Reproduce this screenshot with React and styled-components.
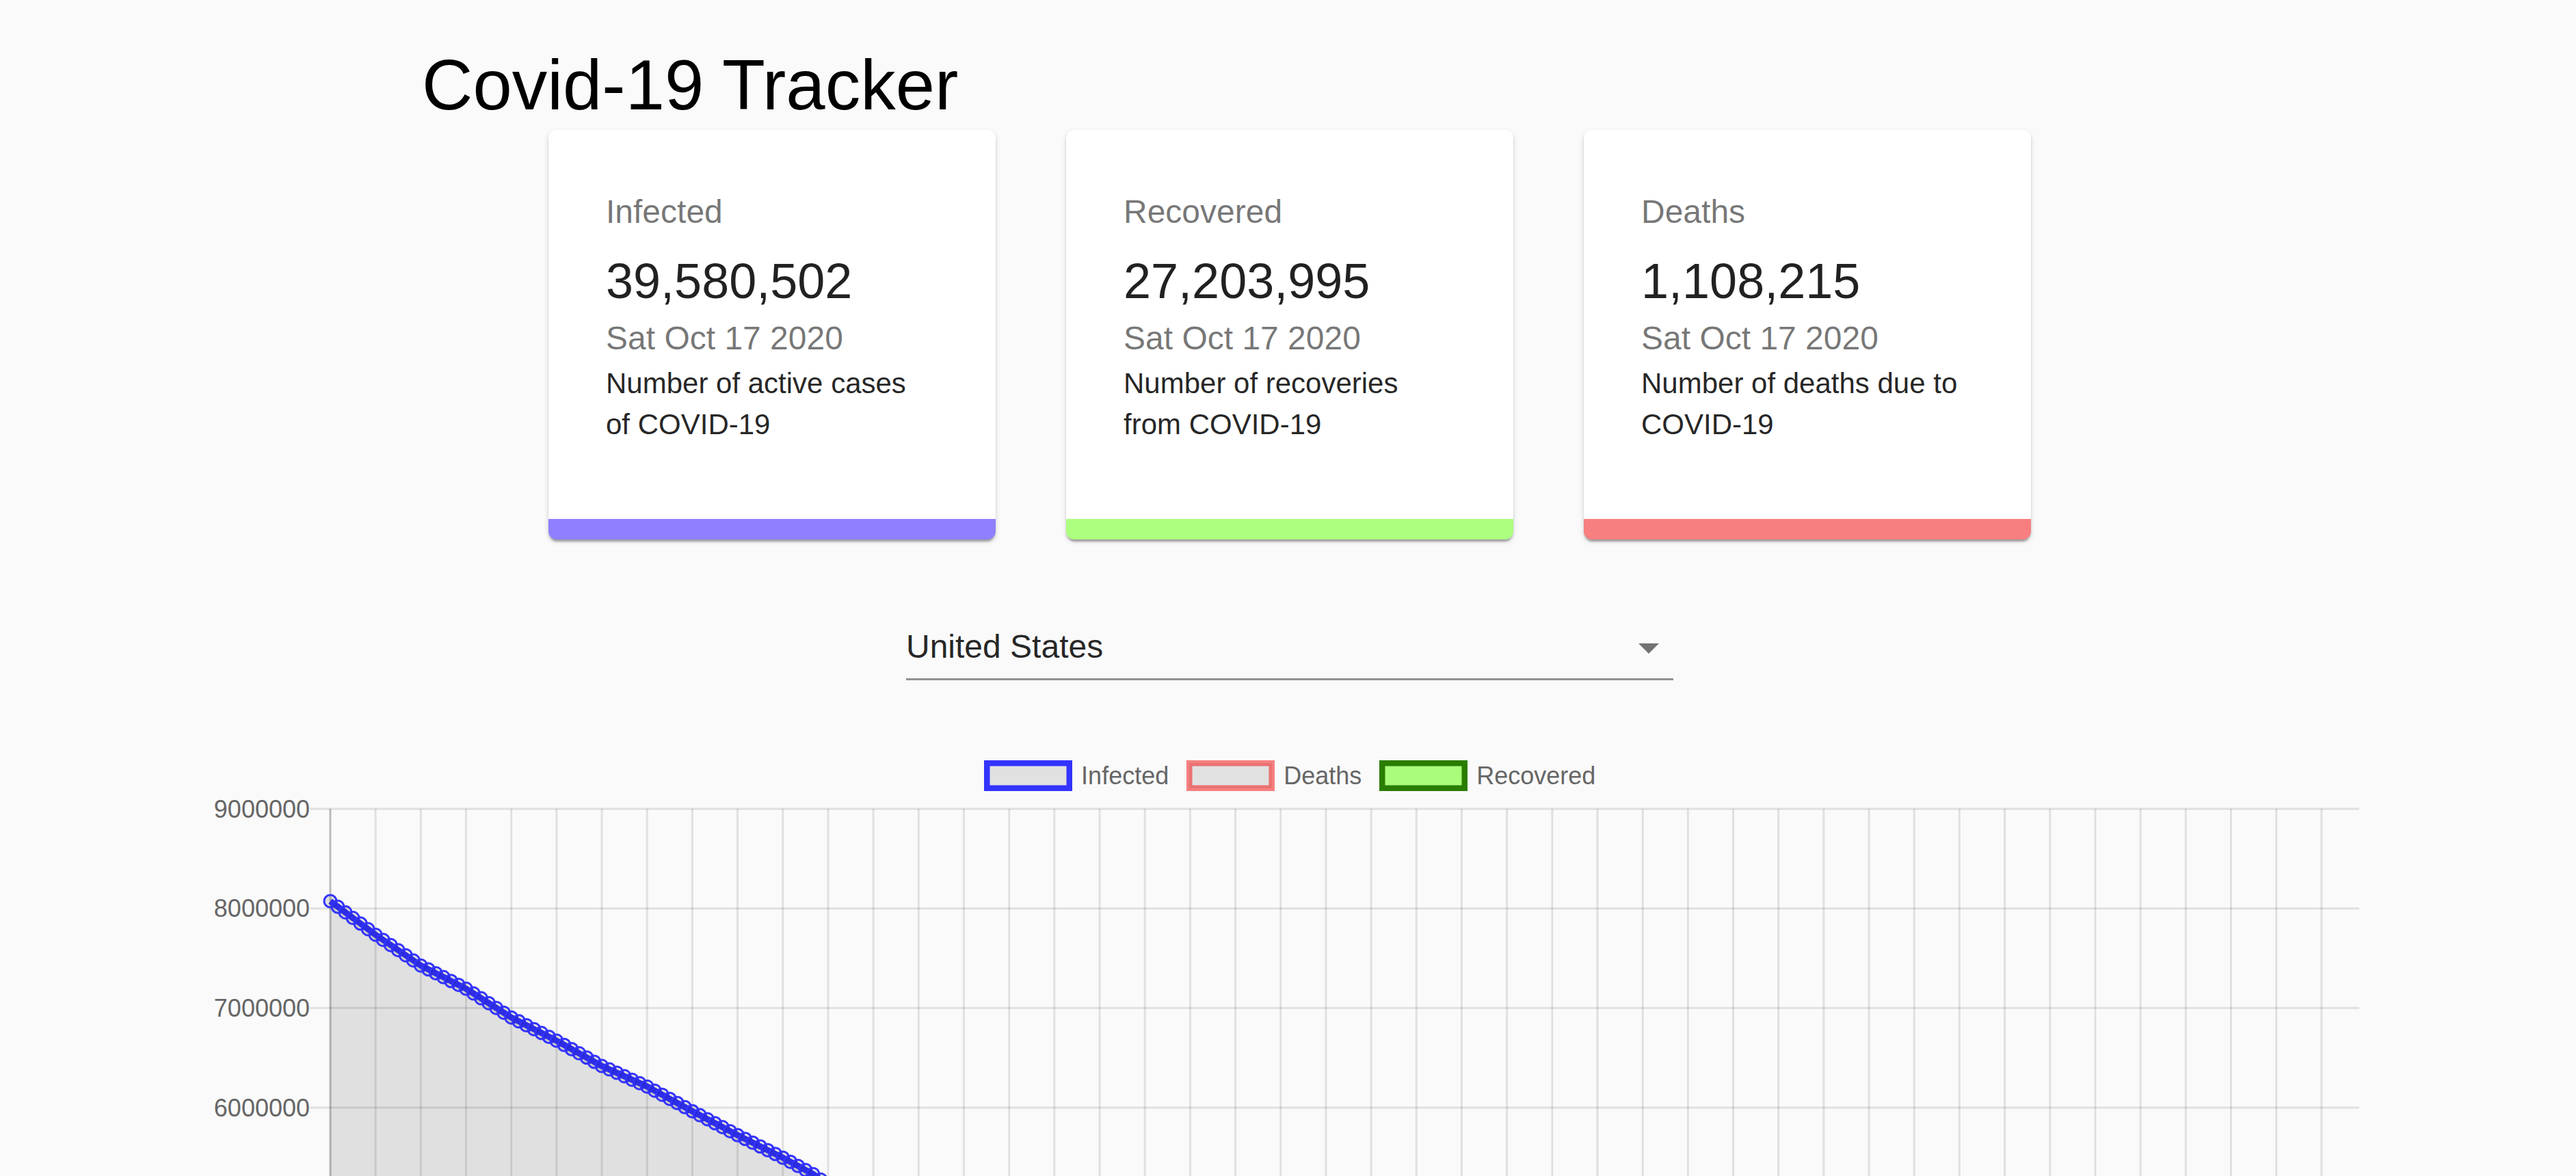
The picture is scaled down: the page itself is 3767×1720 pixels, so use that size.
import React from 'react';
import styled, { createGlobalStyle } from 'styled-components';

const GlobalStyle = createGlobalStyle`
  html, body {
    margin: 0;
    padding: 0;
    background: #fafafa;
  }
  body {
    font-family: 'Liberation Sans', Arial, Helvetica, sans-serif;
  }
`;

const Page = styled.div`
  height: 100vh;
  overflow: hidden;
  box-sizing: border-box;
  padding: 64.8px 0 0 5px;
  display: flex;
  flex-direction: column;
  align-items: center;

  & > * {
    flex-shrink: 0;
  }
`;

const Title = styled.h1`
  align-self: flex-start;
  margin: 0 0 0 612px;
  font-size: 103px;
  font-weight: 400;
  line-height: 120px;
  color: #000;
`;

const CardRow = styled.div`
  display: flex;
  justify-content: center;
  gap: 103px;
  margin-top: 5.2px;
`;

const StatCard = styled.div`
  width: 654px;
  box-sizing: border-box;
  padding: 84px 94px 108px 84px;
  background: #fff;
  border-radius: 12px;
  border-bottom: 30px solid ${props => props.$accent};
  box-shadow: 0 6px 3px -3px rgba(0, 0, 0, 0.2), 0 3px 3px 0 rgba(0, 0, 0, 0.14),
    0 3px 9px 0 rgba(0, 0, 0, 0.12);
`;

const CardLabel = styled.div`
  font-size: 48px;
  line-height: 72px;
  color: rgba(0, 0, 0, 0.54);
  margin-bottom: 16.8px;
`;

const CardValue = styled.div`
  font-size: 72px;
  line-height: 96px;
  color: rgba(0, 0, 0, 0.87);
`;

const CardDate = styled.div`
  font-size: 48px;
  line-height: 72px;
  color: rgba(0, 0, 0, 0.54);
`;

const CardText = styled.p`
  margin: 0;
  font-size: 42px;
  line-height: 60.06px;
  color: rgba(0, 0, 0, 0.87);
`;

const Picker = styled.div`
  position: relative;
  width: 1122px;
  margin: 110px 0 90px;
  border-bottom: 3px solid rgba(0, 0, 0, 0.42);
`;

const PickerSelect = styled.select`
  appearance: none;
  -webkit-appearance: none;
  display: block;
  width: 100%;
  height: 93px;
  box-sizing: border-box;
  padding: 18px 72px 18px 0;
  border: 0;
  border-radius: 0;
  background: transparent;
  font-family: inherit;
  font-size: 48px;
  line-height: 57px;
  color: rgba(0, 0, 0, 0.87);
  outline: none;
`;

const PickerArrow = styled.svg`
  position: absolute;
  right: 0;
  top: 12px;
  width: 72px;
  height: 72px;
  fill: rgba(0, 0, 0, 0.54);
  pointer-events: none;
`;

const ChartWrap = styled.div`
  width: 3202px;
`;

const Legend = styled.div`
  display: flex;
  justify-content: center;
  gap: 25.5px;
  padding-top: 27.5px;
`;

const LegendItem = styled.div`
  display: flex;
  align-items: center;
  gap: 13.5px;
  font-size: 36px;
  line-height: 45px;
  color: #666;
`;

const Swatch = styled.span`
  display: block;
  width: 129px;
  height: 45px;
  box-sizing: border-box;
  border: 4.5px solid ${props => props.$stroke};
  box-shadow: inset 0 0 0 4.5px ${props => props.$inner || props.$stroke};
  background: ${props => props.$fill};
`;

const ChartSvg = styled.svg`
  display: block;
  margin-top: 2.5px;
`;

const AxisLabel = styled.text`
  font-family: 'Liberation Sans', Arial, Helvetica, sans-serif;
  font-size: 36px;
  fill: #666;
`;

// days counted back from Oct 17 2020 (index 0) to Jan 22 2020 (index 269)
const DAYS = 270;

const infectedAnchors = [
  [0, 8073000], [6, 7736000], [12, 7427000], [18, 7194000], [24, 6905000],
  [30, 6672000], [36, 6418000], [42, 6212000], [48, 5964000], [54, 5724000],
  [60, 5497000], [64, 5333000], [77, 4620000], [94, 3500000], [108, 2690000],
  [124, 2110000], [138, 1800000], [155, 1450000], [169, 1100000], [185, 636000],
  [199, 215000], [216, 3500], [230, 75], [269, 1],
];

const deathAnchors = [
  [0, 219000], [30, 198000], [60, 172000], [77, 155000], [108, 130000],
  [138, 105000], [169, 65000], [199, 5000], [216, 60], [269, 0],
];

const recoveredAnchors = [
  [0, 3220000], [30, 2540000], [60, 1880000], [77, 1440000], [108, 790000],
  [138, 480000], [169, 150000], [199, 9000], [230, 7], [269, 0],
];

const interp = (anchors, i) => {
  for (let k = 0; k < anchors.length - 1; k++) {
    const [i0, v0] = anchors[k];
    const [i1, v1] = anchors[k + 1];
    if (i >= i0 && i <= i1) return v0 + ((v1 - v0) * (i - i0)) / (i1 - i0);
  }
  return 0;
};

const series = anchors => Array.from({ length: DAYS }, (_, i) => interp(anchors, i));

const datasets = [
  { label: 'Recovered', stroke: '#2a7d00', fill: 'rgba(90, 255, 0, 0.5)', values: series(recoveredAnchors) },
  { label: 'Deaths', stroke: 'rgba(240, 0, 0, 0.5)', fill: 'rgba(0, 0, 0, 0.1)', values: series(deathAnchors) },
  { label: 'Infected', stroke: '#3333ff', fill: 'rgba(0, 0, 0, 0.1)', values: series(infectedAnchors) },
];

const W = 3202;
const H = 1600;
const AX = 198;
const RX = 3165;
const TOP = 23;
const STEP = 145.67;
const TICK = 30;
const PITCH = (RX - AX) / (DAYS - 1);
const BOTTOM = TOP + 9 * STEP;

const xOf = i => AX + i * PITCH;
const yOf = v => TOP + ((9000000 - v) / 1000000) * STEP;

function Chart() {
  const hLines = Array.from({ length: 10 }, (_, k) => k);
  const vLines = Array.from({ length: 45 }, (_, j) => j * 6);

  return (
    <ChartSvg width={W} height={H} viewBox={`0 0 ${W} ${H}`}>
      {hLines.map(k => (
        <line
          key={`h${k}`}
          x1={AX - TICK}
          x2={RX}
          y1={TOP + k * STEP}
          y2={TOP + k * STEP}
          stroke={k === 9 ? 'rgba(0,0,0,0.25)' : 'rgba(0,0,0,0.1)'}
          strokeWidth="3"
        />
      ))}
      {vLines.map(i => (
        <line
          key={`v${i}`}
          x1={xOf(i)}
          x2={xOf(i)}
          y1={TOP}
          y2={BOTTOM + TICK}
          stroke={i === 0 ? 'rgba(0,0,0,0.25)' : 'rgba(0,0,0,0.1)'}
          strokeWidth="3"
        />
      ))}
      {hLines.map(k => (
        <AxisLabel key={`l${k}`} x={AX - TICK} y={TOP + k * STEP} textAnchor="end" dominantBaseline="central">
          {String((9 - k) * 1000000)}
        </AxisLabel>
      ))}
      {datasets.map(ds => {
        const pts = ds.values.map((v, i) => `${xOf(i).toFixed(2)},${yOf(v).toFixed(2)}`);
        const area = `M${pts.join(' L')} L${xOf(DAYS - 1)},${BOTTOM} L${xOf(0)},${BOTTOM} Z`;
        return (
          <g key={ds.label}>
            <path d={area} fill={ds.fill} />
            <polyline points={pts.join(' ')} fill="none" stroke={ds.stroke} strokeWidth="9" />
            {ds.values.map((v, i) => (
              <circle key={i} cx={xOf(i)} cy={yOf(v)} r="9" fill={ds.fill} stroke={ds.stroke} strokeWidth="3" />
            ))}
          </g>
        );
      })}
    </ChartSvg>
  );
}

const cards = [
  { label: 'Infected', value: '39,580,502', text: 'Number of active cases of COVID-19', accent: '#8f80ff' },
  { label: 'Recovered', value: '27,203,995', text: 'Number of recoveries from COVID-19', accent: '#adff80' },
  { label: 'Deaths', value: '1,108,215', text: 'Number of deaths due to COVID-19', accent: '#f77f7f' },
];

const countries = ['Global', 'United Kingdom', 'United States', 'Uruguay', 'Uzbekistan'];

function App() {
  return (
    <>
      <GlobalStyle />
      <Page>
        <Title>Covid-19 Tracker</Title>

        <CardRow>
          {cards.map(card => (
            <StatCard key={card.label} $accent={card.accent}>
              <CardLabel>{card.label}</CardLabel>
              <CardValue>{card.value}</CardValue>
              <CardDate>Sat Oct 17 2020</CardDate>
              <CardText>{card.text}</CardText>
            </StatCard>
          ))}
        </CardRow>

        <Picker>
          <PickerSelect defaultValue="United States">
            {countries.map(c => (
              <option key={c} value={c}>{c}</option>
            ))}
          </PickerSelect>
          <PickerArrow viewBox="0 0 24 24">
            <path d="M7 10l5 5 5-5z" />
          </PickerArrow>
        </Picker>

        <ChartWrap>
          <Legend>
            <LegendItem>
              <Swatch $stroke="#3333ff" $fill="#e1e1e1" />
              Infected
            </LegendItem>
            <LegendItem>
              <Swatch $stroke="#f58080" $inner="#eb7171" $fill="#e1e1e1" />
              Deaths
            </LegendItem>
            <LegendItem>
              <Swatch $stroke="#2a7d00" $fill="#aafc7d" />
              Recovered
            </LegendItem>
          </Legend>
          <Chart />
        </ChartWrap>
      </Page>
    </>
  );
}

export default App;
